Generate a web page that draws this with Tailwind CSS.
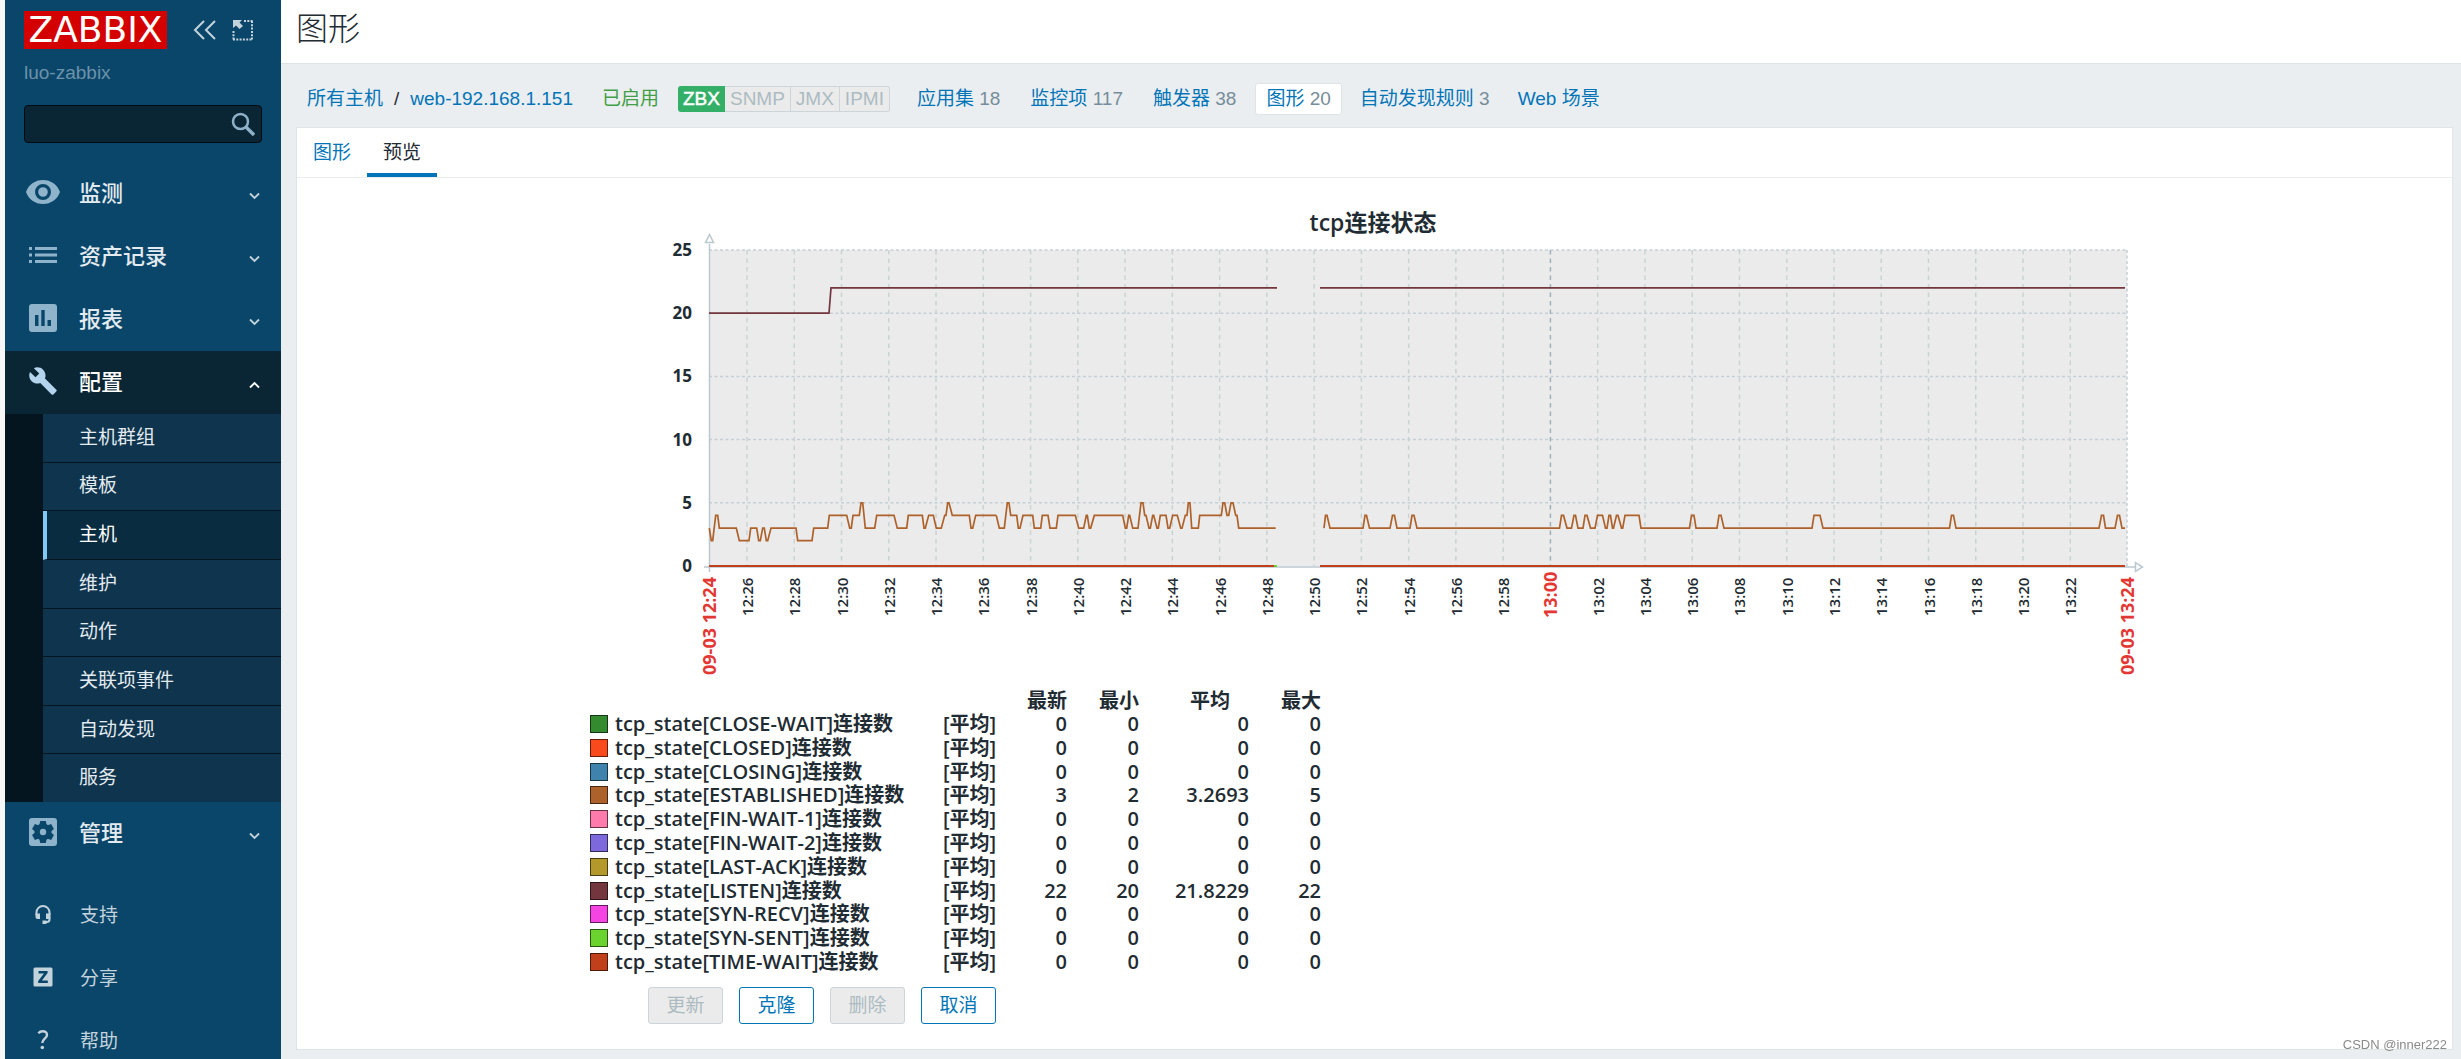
<!DOCTYPE html>
<html lang="zh-CN">
<head>
<meta charset="utf-8">
<meta name="viewport" content="width=device-width, initial-scale=1">
<title>图形 - Zabbix</title>
<script src="https://cdn.jsdelivr.net/npm/@tailwindcss/browser@4"></script>
</head>
<body class="bg-[#ebeef0] text-[#1f2c33] text-[19px] leading-6 font-['Liberation_Sans','Noto_Sans_CJK_SC',sans-serif]">
<div class="flex h-screen overflow-hidden border-l-[5px] border-[#f7f7f7]">

  <!-- Sidebar -->
  <aside class="flex w-[276px] shrink-0 flex-col overflow-hidden bg-[#0a466a]">
    <div class="flex items-center pl-[19px] pt-[11px]">
      <a href="#" class="flex h-[38px] w-[143px] items-center justify-center bg-[#d40000] font-['DejaVu_Sans',sans-serif] text-[36px] leading-9 text-white">ZABBIX</a>
      <button type="button" aria-label="收起" class="ml-[26px]">
        <svg class="h-[22px] w-6" viewBox="0 0 24 22" fill="none" stroke="#c3d3dc" stroke-width="2"><path d="M11 2 2 11l9 9M22 2l-9 9 9 9"/></svg>
      </button>
      <button type="button" aria-label="全屏" class="ml-[15px]">
        <svg class="h-[22px] w-[22px]" viewBox="0 0 22 22"><path d="M1 1h9L7.500 3.500 11 7 7.500 10 4 6.500 1 9z" fill="#c3d3dc"/><path d="M12 2h9M20 2v19M1.500 12v9M1 20.500h19" fill="none" stroke="#c3d3dc" stroke-width="2" stroke-dasharray="2 1.300"/></svg>
      </button>
    </div>
    <div class="pl-[19px] pt-3 text-[#6c92ab]">luo-zabbix</div>
    <form class="mx-[19px] mt-5 flex h-[38px] w-[238px] shrink-0 items-center rounded-[4px] border border-[#020b10] bg-[#0a2635]">
      <input type="text" aria-label="搜索" class="min-w-0 flex-1 bg-transparent px-2 text-white outline-none">
      <button type="button" aria-label="搜索" class="mr-1.5">
        <svg class="h-6 w-6" viewBox="0 0 24 24" fill="none" stroke="#8fb1c8"><circle cx="9.500" cy="9.500" r="7.500" stroke-width="2.500"/><path d="M15 15l8 8" stroke-width="3.400"/></svg>
      </button>
    </form>

    <nav class="mt-[19px] text-[22px] font-medium text-[#e3ebf0]">
      <a href="#" class="flex h-[63px] items-center pl-5 pr-[21px]">
        <svg class="-mt-1 h-6 w-9" viewBox="0 0 36 24"><path fill="#8fb3cb" fill-rule="evenodd" d="M18 0C10 0 3.500 4.800 1 12c2.500 7.200 9 12 17 12s14.500-4.800 17-12C32.500 4.800 26 0 18 0zm0 20a8 8 0 1 1 0-16 8 8 0 0 1 0 16zm0-3.200a4.800 4.800 0 1 0 0-9.600 4.800 4.800 0 0 0 0 9.600z"/></svg>
        <span class="ml-[18px] flex-1">监测</span>
        <svg class="mt-1 h-2 w-[11px]" viewBox="0 0 11 8" fill="none" stroke="#c3d3dc" stroke-width="1.800"><path d="M1 1.500l4.500 4.500L10 1.500"/></svg>
      </a>
      <a href="#" class="flex h-[63px] items-center pl-5 pr-[21px]">
        <svg class="-mt-1 ml-[3px] h-5 w-[30px]" viewBox="0 0 30 20"><path fill="#8fb3cb" d="M1 2h3v3H1zM7 2h22v3H7zM1 8.500h3v3H1zM7 8.500h22v3H7zM1 15h3v3H1zM7 15h22v3H7z"/></svg>
        <span class="ml-[21px] flex-1">资产记录</span>
        <svg class="mt-1 h-2 w-[11px]" viewBox="0 0 11 8" fill="none" stroke="#c3d3dc" stroke-width="1.800"><path d="M1 1.500l4.500 4.500L10 1.500"/></svg>
      </a>
      <a href="#" class="flex h-[63px] items-center pl-5 pr-[21px]">
        <svg class="-mt-1 ml-[3px] h-[30px] w-[30px]" viewBox="0 0 30 30"><path fill="#8fb3cb" fill-rule="evenodd" d="M4 1h22a3 3 0 0 1 3 3v22a3 3 0 0 1-3 3H4a3 3 0 0 1-3-3V4a3 3 0 0 1 3-3zm3 11v11h3.500V12zm6.300-5v16h3.400V7zm6.200 10v6H23v-6z"/></svg>
        <span class="ml-[21px] flex-1">报表</span>
        <svg class="mt-1 h-2 w-[11px]" viewBox="0 0 11 8" fill="none" stroke="#c3d3dc" stroke-width="1.800"><path d="M1 1.500l4.500 4.500L10 1.500"/></svg>
      </a>
      <a href="#" class="flex h-[63px] items-center bg-[#0a2635] pl-5 pr-[21px] text-white">
        <svg class="-mt-1 ml-[3px] h-[30px] w-[30px]" viewBox="0 0 24 24"><path fill="#b3d4ec" d="M22.700 19l-9.100-9.100c.9-2.300.4-5-1.500-6.900-2-2-5-2.400-7.400-1.300L9 6 6 9 1.600 4.700C.4 7.100.9 10.100 2.900 12.100c1.900 1.900 4.600 2.400 6.900 1.500l9.100 9.100c.4.4 1 .4 1.400 0l2.300-2.300c.5-.4.5-1.100.1-1.400z"/></svg>
        <span class="ml-[21px] flex-1">配置</span>
        <svg class="mt-1 h-2 w-[11px]" viewBox="0 0 11 8" fill="none" stroke="#fff" stroke-width="1.800"><path d="M1 6.500L5.500 2 10 6.500"/></svg>
      </a>
      <div class="flex h-[388px] flex-col bg-[#04151f] pl-[38px] text-[19px] font-normal">
        <a href="#" class="flex flex-1 items-center border-b border-[#051620] bg-[#0f344d] pl-9">主机群组</a>
        <a href="#" class="flex flex-1 items-center border-b border-[#051620] bg-[#0f344d] pl-9">模板</a>
        <a href="#" class="flex flex-1 items-center border-b border-l-4 border-b-[#051620] border-l-[#80c8f6] bg-[#0a2c40] pl-8 text-white">主机</a>
        <a href="#" class="flex flex-1 items-center border-b border-[#051620] bg-[#0f344d] pl-9">维护</a>
        <a href="#" class="flex flex-1 items-center border-b border-[#051620] bg-[#0f344d] pl-9">动作</a>
        <a href="#" class="flex flex-1 items-center border-b border-[#051620] bg-[#0f344d] pl-9">关联项事件</a>
        <a href="#" class="flex flex-1 items-center border-b border-[#051620] bg-[#0f344d] pl-9">自动发现</a>
        <a href="#" class="flex flex-1 items-center bg-[#0f344d] pl-9">服务</a>
      </div>
      <a href="#" class="flex h-[63px] items-center pl-5 pr-[21px]">
        <svg class="-mt-1 ml-[3px] h-[30px] w-[30px]" viewBox="0 0 30 30"><rect x="1" y="1" width="28" height="28" rx="3" fill="#8fb3cb"/><g fill="#0a466a"><circle cx="15" cy="15" r="8.500"/><path id="tooth" d="M12.200 4h5.600l1 5h-7.600z"/><use href="#tooth" transform="rotate(60 15 15)"/><use href="#tooth" transform="rotate(120 15 15)"/><use href="#tooth" transform="rotate(180 15 15)"/><use href="#tooth" transform="rotate(240 15 15)"/><use href="#tooth" transform="rotate(300 15 15)"/></g><circle cx="15" cy="15" r="3.200" fill="#8fb3cb"/></svg>
        <span class="ml-[21px] flex-1">管理</span>
        <svg class="mt-1 h-2 w-[11px]" viewBox="0 0 11 8" fill="none" stroke="#c3d3dc" stroke-width="1.800"><path d="M1 1.500l4.500 4.500L10 1.500"/></svg>
      </a>
    </nav>
    <nav class="mt-[19px] text-[#c3d3dc]">
      <a href="#" class="flex h-[63px] items-center pl-7">
        <svg class="-mt-1 h-5 w-5" viewBox="0 0 20 20"><path d="M3.500 11V8.500a6.500 6.500 0 0 1 13 0V11M16.500 13v2.500c0 1.500-1 2.500-3 2.500H11" fill="none" stroke="#c3d3dc" stroke-width="2"/><path d="M2.500 9.500H7V15H4.500a2 2 0 0 1-2-2zM13 9.500h4.500V13a2 2 0 0 1-2 2H13zM9.500 16.500h4V20h-4z" fill="#c3d3dc"/></svg>
        <span class="ml-[27px]">支持</span>
      </a>
      <a href="#" class="flex h-[63px] items-center pl-7">
        <svg class="-mt-1 h-5 w-5" viewBox="0 0 20 20"><path fill="#c3d3dc" fill-rule="evenodd" d="M2 .5h16A1.500 1.500 0 0 1 19.500 2v16a1.500 1.500 0 0 1-1.500 1.500H2A1.500 1.500 0 0 1 .5 18V2A1.500 1.500 0 0 1 2 .5zM5.500 4v2.400h5.400L5.200 14v2h9.600v-2.400H8.900L14.600 6V4z"/></svg>
        <span class="ml-[27px]">分享</span>
      </a>
      <a href="#" class="flex h-[63px] items-center pl-7">
        <svg class="-mt-1 h-5 w-5" viewBox="0 0 20 20"><path d="M5.300 3.200C6.500 1.900 8 1.300 9.700 1.300c2.600 0 4.300 1.300 4.300 3.600 0 3.600-4.700 4-4.700 8.100" fill="none" stroke="#c3d3dc" stroke-width="2.400"/><circle cx="9.300" cy="17.500" r="1.800" fill="#c3d3dc"/></svg>
        <span class="ml-[27px]">帮助</span>
      </a>
    </nav>
  </aside>

  <!-- Page -->
  <main class="flex min-w-0 flex-1 flex-col overflow-auto">
    <header class="flex h-16 shrink-0 items-center border-b border-[#dfe4e7] bg-white pb-1.5 pl-[15px]">
      <h1 class="text-[32px] font-light leading-10">图形</h1>
    </header>

    <nav class="flex h-[63px] shrink-0 items-center whitespace-nowrap pl-[26px] pt-[7px] text-[#0275b8]">
      <a href="#">所有主机</a>
      <span class="mx-[11px] text-[#1f2c33]">/</span>
      <a href="#">web-192.168.1.151</a>
      <span class="ml-[29px] text-[#429e47]">已启用</span>
      <ul class="ml-[19px] flex h-[26px] items-center text-[#acbbc2]">
        <li class="flex h-full items-center rounded-l-[3px] bg-[#34af67] px-[5px] font-medium text-white [-webkit-text-stroke:0.5px_white]">ZBX</li>
        <li class="flex h-full items-center border border-l-0 border-[#ccd5d9] bg-[#ebebeb] px-[5px]">SNMP</li>
        <li class="flex h-full items-center border border-l-0 border-[#ccd5d9] bg-[#ebebeb] px-[5px]">JMX</li>
        <li class="flex h-full items-center rounded-r-[3px] border border-l-0 border-[#ccd5d9] bg-[#ebebeb] px-[5px]">IPMI</li>
      </ul>
      <div class="ml-4 flex items-center gap-2 text-[#768d99]">
        <span class="px-[11px]"><a href="#" class="text-[#0275b8]">应用集</a> 18</span>
        <span class="px-[11px]"><a href="#" class="text-[#0275b8]">监控项</a> 117</span>
        <span class="px-[11px]"><a href="#" class="text-[#0275b8]">触发器</a> 38</span>
        <span class="rounded-[3px] border border-[#dfe4e7] bg-white px-[10px] py-[3px]"><a href="#" class="text-[#0275b8]">图形</a> 20</span>
        <span class="px-[10px]"><a href="#" class="text-[#0275b8]">自动发现规则</a> 3</span>
        <span class="px-[10px]"><a href="#" class="text-[#0275b8]">Web 场景</a></span>
      </div>
    </nav>

    <section class="mb-[9px] ml-[15px] mr-2 flex-1 border border-[#dfe4e7] bg-white">
      <div class="flex h-[50px] border-b border-[#ebeef0]">
        <a href="#" class="flex items-center px-4 text-[#0275b8]">图形</a>
        <a href="#" class="flex items-center border-b-4 border-t-4 border-t-transparent border-[#0275b8] px-4">预览</a>
      </div>

      <div class="pl-[273px] pt-0.5 font-['Open_Sans','Noto_Sans_CJK_SC',sans-serif]">
        <svg id="chart" class="block w-full max-w-[1600px]" viewBox="0 0 1600 510" role="img" aria-label="tcp连接状态"></svg>

        <table class="ml-5 h-[284px] border-collapse whitespace-nowrap text-right text-[20px] font-semibold leading-[22px]">
          <thead>
            <tr><th class="w-[25px] p-0"></th><th class="w-[328px] p-0"></th><th class="w-[56px] p-0"></th>
            <th class="w-[68px] p-0 font-semibold">最新</th><th class="w-[72px] p-0 font-semibold">最小</th><th class="w-[110px] p-0 pr-[19px] font-semibold">平均</th><th class="w-[72px] p-0 font-semibold">最大</th></tr>
          </thead>
          <tbody id="legend"></tbody>
        </table>
      </div>

      <div class="flex gap-4 pl-[351px] pt-[13px]">
        <button type="button" disabled class="h-[37px] w-[75px] rounded-[3px] border border-[#ccd5d9] bg-[#ebebeb] text-[#acbbc2]">更新</button>
        <button type="button" class="h-[37px] w-[75px] rounded-[3px] border border-[#0275b8] bg-white text-[#0275b8]">克隆</button>
        <button type="button" disabled class="h-[37px] w-[75px] rounded-[3px] border border-[#ccd5d9] bg-[#ebebeb] text-[#acbbc2]">删除</button>
        <button type="button" class="h-[37px] w-[75px] rounded-[3px] border border-[#0275b8] bg-white text-[#0275b8]">取消</button>
      </div>
    </section>
  </main>
</div>
<div class="fixed bottom-1 right-[14px] text-[13px] leading-5 text-[#8a8a8a]">CSDN @inner222</div>

<script>
// Legend rows: colour, item key, last, min, avg, max
const items = [
  ['#348a2e', 'CLOSE-WAIT', 0, 0, '0', 0],
  ['#f94a1e', 'CLOSED', 0, 0, '0', 0],
  ['#3f82ac', 'CLOSING', 0, 0, '0', 0],
  ['#ae622b', 'ESTABLISHED', 3, 2, '3.2693', 5],
  ['#fe7bac', 'FIN-WAIT-1', 0, 0, '0', 0],
  ['#7d69dc', 'FIN-WAIT-2', 0, 0, '0', 0],
  ['#b3982b', 'LAST-ACK', 0, 0, '0', 0],
  ['#73353e', 'LISTEN', 22, 20, '21.8229', 22],
  ['#f445e2', 'SYN-RECV', 0, 0, '0', 0],
  ['#6bd32f', 'SYN-SENT', 0, 0, '0', 0],
  ['#c1401c', 'TIME-WAIT', 0, 0, '0', 0],
];
document.getElementById('legend').innerHTML = items.map(([color, key, last, min, avg, max]) => `
  <tr>
    <td class="p-0"><span class="block h-[18px] w-[18px] border border-black/60" style="background:${color}"></span></td>
    <td class="p-0 text-left">tcp_state[${key}]连接数</td>
    <td class="p-0 text-left">[平均]</td>
    <td class="p-0">${last}</td><td class="p-0">${min}</td><td class="p-0">${avg}</td><td class="p-0">${max}</td>
  </tr>`).join('');

// Plot geometry
const L = 139, R = 1557, T = 70, B = 386, MINUTE = 23.63, FIRST = 177;
const y = v => B - v * (B - T) / 25;
const out = [];
out.push(`<rect x="${L}" y="${T}" width="${R - L}" height="${B - T}" fill="#ebebeb"/>`);
for (let v = 5; v <= 25; v += 5)
  out.push(`<path d="M${L} ${y(v)}H${R}" stroke="#c5d0d6" stroke-width="1.500" stroke-dasharray="3 2.500"/>`);
for (let v = 0; v <= 25; v += 5)
  out.push(`<text x="122" y="${y(v) + 6}" text-anchor="end" font-size="17" font-weight="700">${v}</text>`);
for (let i = 0; i < 29; i++) {
  const x = FIRST + i * 2 * MINUTE, m = 26 + i * 2, hour = m === 60;
  const label = (m < 60 ? '12:' : '13:') + String(m % 60).padStart(2, '0');
  out.push(`<path d="M${x} ${T}V${B}" stroke="${hour ? '#9fb2bc' : '#c9d3d3'}" stroke-width="1.500" stroke-dasharray="4.500 4"/>`);
  out.push(hour
    ? `<text transform="translate(${x + 7} 438) rotate(-90)" font-size="18" font-weight="700" fill="#e33734">${label}</text>`
    : `<text transform="translate(${x + 6} 436) rotate(-90)" font-size="15" font-weight="600">${label}</text>`);
}
out.push(`<path d="M${R} ${T}V${B}" stroke="#c5d0d6" stroke-width="1.500" stroke-dasharray="3 2.500"/>`);
for (const [x, label] of [[L + 7, '09-03 12:24'], [R + 7, '09-03 13:24']])
  out.push(`<text transform="translate(${x} 495) rotate(-90)" font-size="18" font-weight="700" fill="#e33734">${label}</text>`);
out.push(`<text x="803" y="51" text-anchor="middle" font-size="23" font-weight="600">tcp连接状态</text>`);
out.push(`<path d="M${L + .5} 64V392M134 387H1565" stroke="#bac8cf" stroke-width="1.500" fill="none"/>`);
out.push(`<path d="M135.500 62.500h8l-4-8zM1565.500 382.500v9l7-4.500z" fill="#fff" stroke="#bac8cf" stroke-width="1.500"/>`);

// Each run: start x, samples per pixel, then "offset:value" pairs
const line = (start, unit, pts, color, width = 1.7) => {
  const d = pts.split(' ').map(p => { const [x, v] = p.split(':').map(Number); return (start + x / unit).toFixed(1) + ',' + y(v).toFixed(1); }).join(' ');
  out.push(`<polyline points="${d}" fill="none" stroke="${color}" stroke-width="${width}"/>`);
};
line(139, 1, '0:20 120:20 122:22 568:22', '#73353e');
line(750, 1, '0:22 805:22', '#73353e');
line(110, 3, '88:3 94:2 98:2 107:4 113:4 118:3 169:3 178:2 207:2 212:3 230:3 236:2 241:2 248:3 253:3 259:2 263:2 273:3 348:3 353:2 396:2 401:3 443:3 448:4 500:4 509:3 514:3 519:4 538:4 543:5 548:5 556:3 584:3 590:4 642:4 652:3 680:3 685:4 727:4 732:3 736:3 746:4 760:4 769:3 784:3 794:4 798:4 803:5 807:5 817:4 868:4 873:3 878:3 887:4 949:4', '#ae622b');
line(420, 3, '19:4 28:3 43:3 52:5 57:5 62:4 80:4 85:3 90:3 99:4 128:4 133:3 152:3 157:4 174:4 180:3 199:3 204:4 256:4 266:3 281:3 289:4 292:4 298:3 302:3 313:4 398:4 406:3 410:3 416:4 419:4 428:3 444:3 453:5 459:5 464:4 468:4 477:3 481:3 488:4 491:4 501:3 505:3 511:4 528:4 534:3 539:3 548:4 562:4 572:3 576:3 586:4 591:4 595:5 600:5 605:3 625:3 629:4 694:4 699:5 704:5 711:4 716:4 723:5 729:5 737:4 741:4 746:3 857:3', '#ae622b');
line(753, 1, '1:3 2.5:4 4:4 7:3 40:3 42:4 43.5:4 46.5:3 67:3 69.5:4 71.5:4 74:3 87:3 89:4 91:4 94:3 236.5:3 238.5:4 240.5:4 244:3 248.5:3 251:4 252.5:4 255:3 260:3 262:4 264:4 267.5:3 272:3 274.5:4 279.5:4 282.5:3 284:3 286:4 287.5:4 289.5:3 290.5:3 293.5:4 295:4 298.5:3 299.7:3 302:4 316:4 318:3 366.5:3 368.5:4 371:4 373:3 394:3 396:4 398:4 401:3 489:3 491:4 497:4 500:3 626.5:3 628.5:4 630.5:4 633:3 776:3 778.5:4 780.5:4 782.5:3 792:3 794.5:4 796.5:4 799:3 802:3', '#ae622b');
line(139, 1, '0:0 568:0', '#6bd32f', 2);
line(139, 1, '0:0 565:0', '#c1401c', 2);
line(750, 1, '0:0 805:0', '#c1401c', 2);
const chart = document.getElementById('chart');
chart.setAttribute('fill', '#1f2c33');
chart.innerHTML = out.join('');
</script>
</body>
</html>
